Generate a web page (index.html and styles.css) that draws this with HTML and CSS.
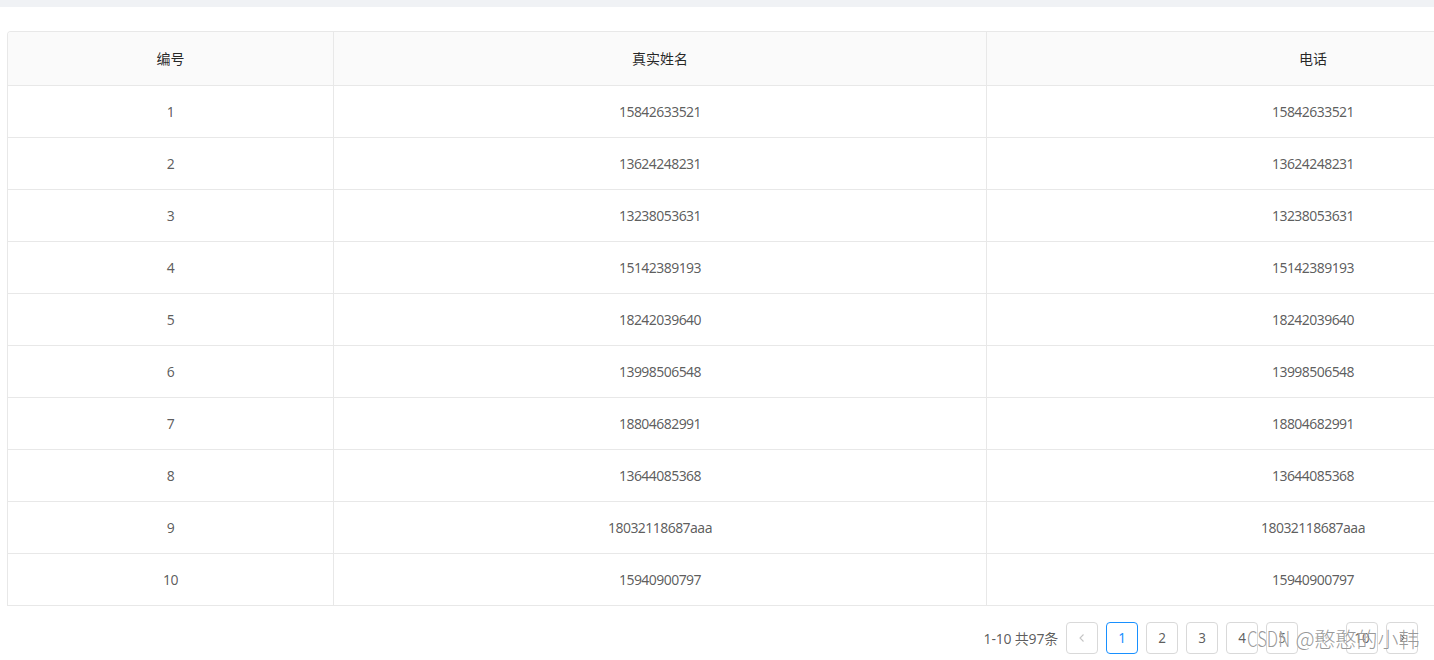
FILE: index.html
```html
<!DOCTYPE html>
<html lang="zh">
<head>
<meta charset="utf-8">
<link rel="stylesheet" href="styles.css">
</head>
<body>
<div class="topbar"></div>
<div class="content">
  <div class="table">
    <div class="row head">
      <div class="cell">编号</div>
      <div class="cell">真实姓名</div>
      <div class="cell">电话</div>
    </div>
    <div class="row"><div class="cell num">1</div><div class="cell num">15842633521</div><div class="cell num">15842633521</div></div>
    <div class="row"><div class="cell num">2</div><div class="cell num">13624248231</div><div class="cell num">13624248231</div></div>
    <div class="row"><div class="cell num">3</div><div class="cell num">13238053631</div><div class="cell num">13238053631</div></div>
    <div class="row"><div class="cell num">4</div><div class="cell num">15142389193</div><div class="cell num">15142389193</div></div>
    <div class="row"><div class="cell num">5</div><div class="cell num">18242039640</div><div class="cell num">18242039640</div></div>
    <div class="row"><div class="cell num">6</div><div class="cell num">13998506548</div><div class="cell num">13998506548</div></div>
    <div class="row"><div class="cell num">7</div><div class="cell num">18804682991</div><div class="cell num">18804682991</div></div>
    <div class="row"><div class="cell num">8</div><div class="cell num">13644085368</div><div class="cell num">13644085368</div></div>
    <div class="row"><div class="cell num">9</div><div class="cell num">18032118687aaa</div><div class="cell num">18032118687aaa</div></div>
    <div class="row"><div class="cell num">10</div><div class="cell num">15940900797</div><div class="cell num">15940900797</div></div>
  </div>
  <div class="pager">
    <span class="total">1-10 共97条</span>
    <span class="pbtn arrow"><svg width="10" height="10" viewBox="0 0 10 10"><path d="M6.5 1.5 L3 5 L6.5 8.5" fill="none" stroke="#c4c4c4" stroke-width="1.1"/></svg></span>
    <span class="pbtn active">1</span>
    <span class="pbtn">2</span>
    <span class="pbtn">3</span>
    <span class="pbtn">4</span>
    <span class="pbtn">5</span>
    <span class="pbtn jump">•••</span>
    <span class="pbtn">10</span>
    <span class="pbtn arrow last"><svg width="10" height="10" viewBox="0 0 10 10"><path d="M3.5 1.5 L7 5 L3.5 8.5" fill="none" stroke="#595959" stroke-width="1.1"/></svg></span>
    <span class="watermark"><span class="wm-latin">CSDN</span> @憨憨的小韩</span>
  </div>
</div>
</body>
</html>
```
FILE: styles.css
```css
html, body {
  margin: 0;
  padding: 0;
  background: #fff;
  overflow: hidden;
  width: 1434px;
  height: 660px;
}
body {
  font-family: "Noto Sans", "Noto Sans CJK SC", sans-serif;
  font-size: 14px;
  color: rgba(0, 0, 0, 0.65);
}
.topbar {
  height: 7px;
  background: #f0f2f5;
}
.content {
  padding: 24px 16px 0 7px;
}
.table {
  width: 1632px;
  border: 1px solid #e8e8e8;
  border-bottom: none;
  border-radius: 4px 4px 0 0;
  box-sizing: border-box;
  overflow: hidden;
}
.row {
  display: grid;
  grid-template-columns: 326px 653px 652px;
}
.cell {
  box-sizing: border-box;
  height: 52px;
  border-bottom: 1px solid #e8e8e8;
  border-right: 1px solid #e8e8e8;
  display: flex;
  align-items: center;
  justify-content: center;
  line-height: 20px;
}
.cell:last-child {
  border-right: none;
}
.head .cell {
  height: 54px;
  background: #fafafa;
  color: rgba(0, 0, 0, 0.85);
  font-size: 14px;
}
.num {
  letter-spacing: -0.55px;
  padding-top: 1px;
}
.pager {
  position: relative;
  display: flex;
  justify-content: flex-end;
  align-items: center;
  margin-top: 16px;
}
.total {
  margin-right: 8px;
  font-size: 14px;
  letter-spacing: -0.2px;
}
.pbtn {
  box-sizing: border-box;
  width: 32px;
  height: 32px;
  margin-right: 8px;
  border: 1px solid #d9d9d9;
  border-radius: 4px;
  display: flex;
  align-items: center;
  justify-content: center;
  font-size: 13.5px;
  color: rgba(0, 0, 0, 0.65);
  background: #fff;
}
.pbtn.active {
  border-color: #1890ff;
  color: #1890ff;
}
.pbtn.jump {
  border-color: transparent;
  color: rgba(0, 0, 0, 0.2);
  font-size: 10px;
  letter-spacing: 1px;
}
.pbtn.last {
  margin-right: 0;
}
.watermark {
  position: absolute;
  left: 1240px;
  top: 2px;
  font-family: "Noto Sans CJK SC", sans-serif;
  font-size: 21px;
  font-weight: 300;
  line-height: 28px;
  color: rgba(120, 120, 120, 0.75);
  white-space: nowrap;
  text-shadow: 0 0 1px #fff;
}
.wm-latin {
  display: inline-block;
  transform: scaleX(0.8);
  transform-origin: left center;
  margin-right: -10px;
}
```
